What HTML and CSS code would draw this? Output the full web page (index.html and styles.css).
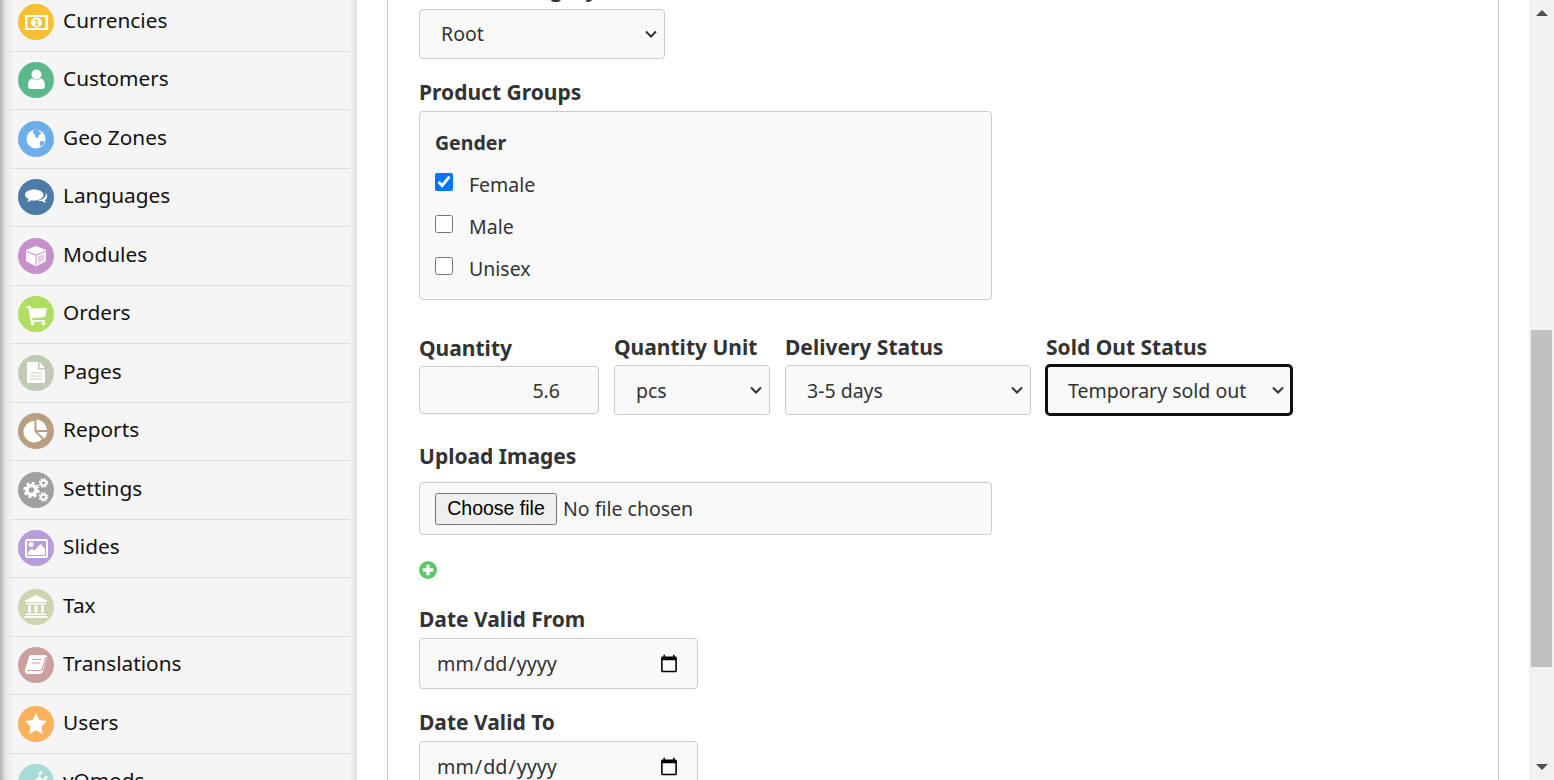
FILE: index.html
```html
<!DOCTYPE html>
<html lang="en">
<head>
    <meta charset="UTF-8">
    <meta name="viewport" content="width=device-width, initial-scale=1.0">
    <title>Edit Product</title>
    <link rel="stylesheet" href="styles.css">
</head>
<body>
    <div class="page">
        <nav class="sidebar">
            <a class="nav-item"><span class="nav-icon c-currencies"><svg viewBox="0 0 36 36"><rect class="w" x="7" y="11" width="23" height="15"/><rect class="bg" x="9.500" y="13" width="18" height="11"/><ellipse class="w" cx="18.500" cy="18.500" rx="5.500" ry="5"/><path class="bg" d="M17.300 15.500h2.200v5h1v1.200h-3.600v-1.200h1v-3.500h-.9z"/></svg></span><span class="nav-label">Currencies</span></a>
            <a class="nav-item"><span class="nav-icon c-customers"><svg viewBox="0 0 36 36"><circle class="w" cx="18.500" cy="12.500" r="5"/><path class="w" d="M10 24c0-5 2-7.500 4.500-7.500 1 .8 2.500 1.300 4 1.300s3-.5 4-1.300c2.500 0 4.500 2.500 4.500 7.500 0 2-1.200 3-3 3H13c-1.800 0-3-1-3-3z"/></svg></span><span class="nav-label">Customers</span></a>
            <a class="nav-item"><span class="nav-icon c-geo"><svg viewBox="0 0 36 36"><circle class="w" cx="18" cy="18" r="9.500"/><path class="bg" d="M16 8.700c1.500-.3 3-.3 4.500.2l1 2 1.800.6-.8 2-2 .6.300 2-2 1-1.500-1-.4-2.500-2-1.500.4-2.200zM22.500 20l4 .3-.8 2.700-3 2.500-1.200-2.500z"/></svg></span><span class="nav-label">Geo Zones</span></a>
            <a class="nav-item"><span class="nav-icon c-languages"><svg viewBox="0 0 36 36"><path class="w" d="M16 10.500c5.300 0 9.500 2.400 9.500 5.500s-4.200 5.500-9.500 5.500c-.9 0-1.800-.1-2.600-.2-1.300.9-2.800 1.500-4.400 1.700.8-.9 1.400-1.800 1.700-2.900C8.500 19.100 7 17.600 7 16c0-3.100 4-5.500 9-5.500z"/><path class="w" d="M26.800 13.500c1.500.9 2.400 2.200 2.400 3.700 0 1.600-1 3-2.600 3.900.3 1 .8 1.900 1.500 2.700-1.500-.2-2.800-.9-3.900-1.800-1.500.2-3.400.1-5-.6 4 0 8.700-2.400 8.700-6.100 0-.6-.2-1.200-.6-1.800z"/></svg></span><span class="nav-label">Languages</span></a>
            <a class="nav-item"><span class="nav-icon c-modules"><svg viewBox="0 0 36 36"><path class="w" d="M18 8l10 4v11l-10 5.500L8 23V12z"/><path class="bg" d="M8.500 12.800l9.500 3.800 9.500-3.800v1l-9 3.600v10.400h-1V17.400l-9-3.600z"/><path class="bg" d="M20 18.300l6.300-2.500v6.400L20 25.700z" opacity=".45"/></svg></span><span class="nav-label">Modules</span></a>
            <a class="nav-item"><span class="nav-icon c-orders"><svg viewBox="0 0 36 36"><path class="w" d="M8.500 10h4l.7 2.200H29l-1.900 8.800-13 1.300.3 1.700h12.600v1.800H12.600L10.500 12H8.500z"/><circle class="w" cx="14.500" cy="27.500" r="1.800"/><circle class="w" cx="25.500" cy="27.500" r="1.800"/></svg></span><span class="nav-label">Orders</span></a>
            <a class="nav-item"><span class="nav-icon c-pages"><svg viewBox="0 0 36 36"><path class="w" d="M9 7h11v7.500h7V28H9z"/><path class="w" d="M21.500 7l5.500 6h-5.500z"/><path class="line" d="M12.500 18h11M12.500 21h11M12.500 24h11"/></svg></span><span class="nav-label">Pages</span></a>
            <a class="nav-item"><span class="nav-icon c-reports"><svg viewBox="0 0 36 36"><path class="w" d="M16.500 8v10.500L24 26a10.700 10.700 0 1 1-7.500-18z"/><path class="w" d="M18.500 6.500a11 11 0 0 1 10.500 10.500H18.500z"/><path class="w" d="M19.500 19h9.800a11 11 0 0 1-3 6.500z"/></svg></span><span class="nav-label">Reports</span></a>
            <a class="nav-item"><span class="nav-icon c-settings"><svg viewBox="0 0 36 36"><circle class="gear" cx="13.500" cy="18" r="4.500"/><circle class="teeth" cx="13.500" cy="18" r="7"/><circle class="gear-s" cx="25.500" cy="11" r="2.500"/><circle class="teeth-s" cx="25.500" cy="11" r="4"/><circle class="gear-s" cx="25.500" cy="25" r="2.500"/><circle class="teeth-s" cx="25.500" cy="25" r="4"/></svg></span><span class="nav-label">Settings</span></a>
            <a class="nav-item"><span class="nav-icon c-slides"><svg viewBox="0 0 36 36"><rect class="line-w" x="8" y="10" width="21" height="17" rx="1.500"/><circle class="w" cx="13" cy="14.500" r="2.500"/><path class="w" d="M10 25v-3l4-3.500 2.500 2 6-6.500 4.500 5v6z"/></svg></span><span class="nav-label">Slides</span></a>
            <a class="nav-item"><span class="nav-icon c-tax"><svg viewBox="0 0 36 36"><path class="w" d="M18 6l11 5.500v1.500H7v-1.500z"/><path class="w" d="M8 14h20v1.500H8zM10 16.500h3v7h-3zM16.500 16.500h3v7h-3zM23 16.500h3v7h-3zM8 24.500h20V26H8zM6.500 27h23v2h-23z"/></svg></span><span class="nav-label">Tax</span></a>
            <a class="nav-item"><span class="nav-icon c-translations"><svg viewBox="0 0 36 36"><path class="w" d="M12.500 8h14.500c1.500 0 2.300 1 2 2.300l-4 14.200c-.5 1.500-1.600 2.500-3.300 2.500H10c-2.500 0-3.500-2-3-4l4-13c.2-1 .7-2 1.500-2z"/><path class="bg-line" d="M9 23.500h13.500c1 0 1.700-.5 2-1.500l3.500-12M14.500 12.500h9M13.500 16h9"/></svg></span><span class="nav-label">Translations</span></a>
            <a class="nav-item"><span class="nav-icon c-users"><svg viewBox="0 0 36 36"><path class="w" d="M18 7l3.400 7 7.600 1.100-5.500 5.400 1.300 7.600-6.800-3.600-6.800 3.600 1.300-7.600L7 15.100l7.600-1.100z"/></svg></span><span class="nav-label">Users</span></a>
            <a class="nav-item"><span class="nav-icon c-vqmods"><svg viewBox="0 0 36 36"><path class="w" d="M12 22l9-10 4.500 4-8 9.500c-2 1.200-4 1-5.500-1.500-.3-.7-.3-1.300 0-2zM20 10l3-3.500 2 1.700-3 3.500zM25 15l3-3.500 2 1.700-3 3.500zM12 25l-4 5-1.500-1.500 4-5z"/></svg></span><span class="nav-label">vQmods</span></a>
        </nav>

        <main class="main">
            <form class="panel">
                <div class="field">
                    <label class="field-label">Default Category</label>
                    <select class="control select-wide"><option>Root</option></select>
                </div>

                <div class="field field-groups">
                    <label class="field-label">Product Groups</label>
                    <div class="box">
                        <strong class="box-title">Gender</strong>
                        <label class="check"><input type="checkbox" checked>Female</label>
                        <label class="check"><input type="checkbox">Male</label>
                        <label class="check"><input type="checkbox">Unisex</label>
                    </div>
                </div>

                <div class="row">
                    <div class="col col-qty">
                        <label class="field-label">Quantity</label>
                        <input class="control qty" type="text" value="5.6">
                    </div>
                    <div class="col col-unit">
                        <label class="field-label">Quantity Unit</label>
                        <select class="control"><option>pcs</option></select>
                    </div>
                    <div class="col col-status">
                        <label class="field-label">Delivery Status</label>
                        <select class="control"><option>3-5 days</option></select>
                    </div>
                    <div class="col col-status">
                        <label class="field-label">Sold Out Status</label>
                        <select class="control focused"><option>Temporary sold out</option></select>
                    </div>
                </div>

                <div class="field field-upload">
                    <label class="field-label">Upload Images</label>
                    <div class="control file"><button class="file-btn" type="button">Choose file</button><span>No file chosen</span></div>
                </div>

                <a class="add-link"><svg viewBox="0 0 18 18" width="18" height="18"><circle cx="9" cy="9" r="9" fill="#5cc765"/><path d="M7.300 3.800h3.400v3.500h3.500v3.400h-3.500v3.500H7.300v-3.500H3.800V7.300h3.500z" fill="#fff"/></svg></a>

                <div class="field field-date">
                    <label class="field-label">Date Valid From</label>
                    <input class="control date" type="date">
                </div>
                <div class="field field-date">
                    <label class="field-label">Date Valid To</label>
                    <input class="control date" type="date">
                </div>
            </form>
        </main>

        <div class="scrollbar">
            <span class="arrow arrow-up"></span>
            <span class="thumb"></span>
            <span class="arrow arrow-down"></span>
        </div>
    </div>
</body>
</html>
```

FILE: styles.css
```css
*{
    box-sizing: border-box;
}
html, body{
    margin: 0;
    height: 100%;
    overflow: hidden;
}
body{
    font-family: "Noto Sans", "Open Sans", sans-serif;
    font-size: 19.5px;
    color: #333;
    background: #fff;
}
.page{
    display: flex;
    height: 780px;
    overflow: hidden;
}

/* sidebar */
.sidebar{
    width: 357px;
    flex: none;
    padding: 0 7px 0 10px;
    background: linear-gradient(to right, #b4b4b4 0, #e8e8e8 6px, #f5f5f5 13px, #f5f5f5 349px, #e0e0e0 357px);
}
.nav-item{
    display: flex;
    align-items: center;
    height: 58.5px;
    padding-left: 8px;
    gap: 9px;
    font-size: 20.8px;
    color: #111;
    border-bottom: 1px solid #ddd;
    line-height: 1;
}
.nav-item:first-child{
    margin-top: -7px;
}
.nav-label{
    margin-bottom: 3px;
}
.nav-icon{
    width: 36px;
    height: 36px;
    border-radius: 50%;
    flex: none;
    display: block;
    color: var(--c);
    background: var(--c);
}
.nav-icon svg{
    display: block;
    width: 36px;
    height: 36px;
}
.w{ fill: #fff; }
.bg{ fill: currentColor; }
.line{ stroke: #c0cbb5; stroke-width: 1; fill: none; }
.line-w{ stroke: #fff; stroke-width: 2; fill: none; }
.bg-line{ stroke: currentColor; stroke-width: 1.200; fill: none; }
.gear{ fill: none; stroke: #fff; stroke-width: 3.600; }
.teeth{ fill: none; stroke: #fff; stroke-width: 2.400; stroke-dasharray: 3 2.500; }
.gear-s{ fill: none; stroke: #fff; stroke-width: 1.800; }
.teeth-s{ fill: none; stroke: #fff; stroke-width: 1.500; stroke-dasharray: 1.800 1.340; }

.c-currencies{ --c: #f6c033; }
.c-customers{ --c: #5cb88b; }
.c-geo{ --c: #6daeea; }
.c-languages{ --c: #4d7ba8; }
.c-modules{ --c: #c792cb; }
.c-orders{ --c: #b3dc62; }
.c-pages{ --c: #c0cbb5; }
.c-reports{ --c: #b89f82; }
.c-settings{ --c: #a0a0a0; }
.c-slides{ --c: #b89ed9; }
.c-tax{ --c: #cdd5b0; }
.c-translations{ --c: #cda0a0; }
.c-users{ --c: #fbb05c; }
.c-vqmods{ --c: #a6dbd6; }

/* main */
.main{
    flex: 1;
    min-width: 0;
    padding: 0 30px;
}
.panel{
    height: 100%;
    padding: 1px 30px 0 31px;
    border-left: 1px solid #ccc;
    border-right: 1px solid #ccc;
}
.field-label{
    display: block;
    font-size: 21px;
    font-weight: 700;
    line-height: 27px;
    color: #333;
}
.control{
    display: block;
    width: 100%;
    height: 50px;
    padding: 0 4px 0 21px;
    font-family: inherit;
    font-size: 19.5px;
    color: #333;
    background-color: #f9f9f9;
    border: 1px solid #ccc;
    border-radius: 4px;
}
select.control{
    appearance: none;
    background-image: url("data:image/svg+xml,%3Csvg xmlns='http://www.w3.org/2000/svg' width='12' height='8' viewBox='0 0 12 8'%3E%3Cpath d='M1 1.500l5 5 5-5' fill='none' stroke='%23333' stroke-width='2'/%3E%3C/svg%3E");
    background-repeat: no-repeat;
    background-position: right 7px center;
}
.field:first-child{
    margin-top: -25px;
}
.field .field-label{
    margin-bottom: 6px;
}
.select-wide{
    width: 246px;
    padding-bottom: 2px;
}
.field-groups{
    margin-top: 20px;
}
.field-groups .field-label{
    margin-bottom: 5px;
}
.box{
    width: 573px;
    height: 189px;
    padding: 17px 15px;
    background: #f9f9f9;
    border: 1px solid #ccc;
    border-radius: 4px;
}
.box-title{
    display: block;
    line-height: 27px;
    margin-bottom: 7px;
}
.check{
    display: flex;
    align-items: center;
    height: 42px;
}
.check input{
    width: 18px;
    height: 18px;
    margin: -4px 16px 0 0;
}

.row{
    display: flex;
    gap: 15px;
    margin-top: 34px;
}
.col-qty{
    width: 180px;
    padding-top: 1px;
}
.col-unit{
    width: 156px;
}
.col-status{
    width: 246px;
}
.col .field-label{
    margin-bottom: 4px;
}
.qty{
    height: 48px;
    text-align: right;
    padding-right: 38px;
}
.focused{
    outline: 3px solid #101010;
    outline-offset: -2px;
}

.field-upload{
    margin-top: 28px;
}
.field-upload .field-label{
    margin-bottom: 12px;
}
.file{
    display: flex;
    align-items: center;
    gap: 6px;
    width: 573px;
    height: 53px;
    padding: 0 15px;
}
.file-btn{
    width: 122px;
    height: 32px;
    padding: 0;
    font-family: "Liberation Sans", Arial, sans-serif;
    font-size: 19.5px;
    color: #000;
}
.add-link{
    display: block;
    width: 18px;
    height: 18px;
    margin-top: 26px;
}
.add-link svg{
    display: block;
}
.field-date{
    margin-top: 27px;
}
.field-date + .field-date{
    margin-top: 20px;
}
.field-date .field-label{
    margin-bottom: 5px;
}
.date{
    width: 279px;
    height: 51px;
    padding: 0 16px 0 16px;
    font-size: 19.7px;
}

/* scrollbar */
.scrollbar{
    width: 25px;
    flex: none;
    display: flex;
    flex-direction: column;
    align-items: center;
    background: #f1f1f1;
}
.arrow{
    width: 0;
    height: 0;
    border-left: 6px solid transparent;
    border-right: 6px solid transparent;
}
.arrow-up{
    margin-top: 10px;
    border-bottom: 6px solid #505050;
}
.arrow-down{
    margin-top: 97px;
    border-top: 6px solid #505050;
}
.thumb{
    width: 21px;
    height: 337px;
    margin-top: 314px;
    background: #c1c1c1;
}
```
